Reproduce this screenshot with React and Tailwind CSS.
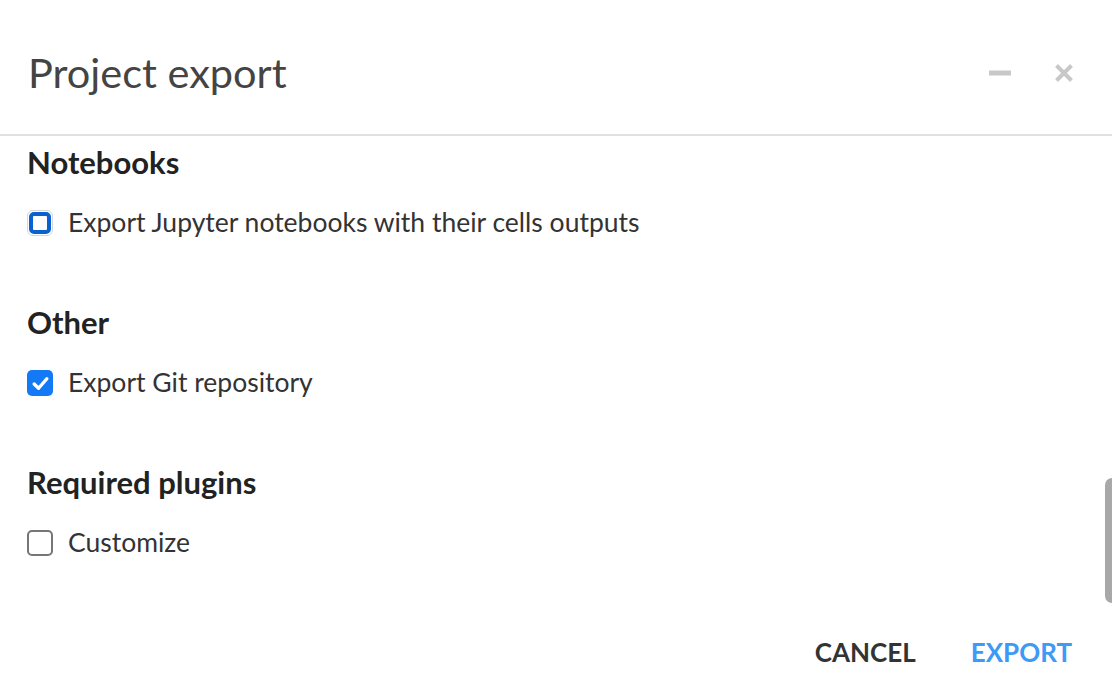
import { useState } from 'react'

const font = { fontFamily: 'Lato, "Noto Sans", sans-serif' }

function Checkbox({ checked, focused, onChange }) {
  if (checked) {
    return (
      <button onClick={onChange} className="w-[26px] h-[26px] rounded-[5px] bg-[#1479f5] flex items-center justify-center shrink-0">
        <svg width="19" height="19" viewBox="0 0 18 18">
          <path d="M3 9.5 L7.2 13.5 L15 4.5" fill="none" stroke="#fff" strokeWidth="3.2" strokeLinecap="round" strokeLinejoin="round" />
        </svg>
      </button>
    )
  }
  if (focused) {
    return (
      <button onClick={onChange} className="w-[26px] h-[26px] rounded-[6px] border border-[#d6d6d6] p-[1px] shrink-0">
        <span className="block w-full h-full rounded-[5px] border-[4px] border-[#0a62d0]" />
      </button>
    )
  }
  return (
    <button onClick={onChange} className="w-[26px] h-[26px] rounded-[5px] border-2 border-[#767676] bg-white shrink-0" />
  )
}

function Section({ title, label, checked, focused, onToggle, first }) {
  return (
    <div className={first ? 'pt-[6px]' : 'pt-[59px]'}>
      <h2 className="h-[40px] flex items-center text-[31px] font-bold text-[#222]">{title}</h2>
      <label className="mt-[21px] h-[40px] flex items-center gap-[15px] cursor-pointer">
        <Checkbox checked={checked} focused={focused} onChange={onToggle} />
        <span className="text-[26.5px] text-[#333]">{label}</span>
      </label>
    </div>
  )
}

export default function App() {
  const [opts, setOpts] = useState({ notebooks: false, git: true, plugins: false })
  const toggle = (k) => setOpts((o) => ({ ...o, [k]: !o[k] }))

  return (
    <div className="relative w-[1112px] h-[700px] bg-white overflow-hidden" style={font}>
      <div className="h-[136px] border-b-2 border-[#e0e0e0] flex items-center justify-between pl-[28px] pr-[38px]">
        <h1 className="text-[41.5px] text-[#444] pt-[10px]">Project export</h1>
        <div className="flex items-center gap-[43px] pt-[12px]">
          <svg width="22" height="6" viewBox="0 0 22 6">
            <rect x="0" y="0.5" width="22" height="5" fill="#c8c8c8" />
          </svg>
          <svg width="20" height="20" viewBox="0 0 20 20">
            <path d="M2.5 2.5 L17.5 17.5 M17.5 2.5 L2.5 17.5" stroke="#c8c8c8" strokeWidth="4" />
          </svg>
        </div>
      </div>

      <div className="px-[27px]">
        <Section
          first
          title="Notebooks"
          label="Export Jupyter notebooks with their cells outputs"
          checked={opts.notebooks}
          focused
          onToggle={() => toggle('notebooks')}
        />
        <Section
          title="Other"
          label="Export Git repository"
          checked={opts.git}
          onToggle={() => toggle('git')}
        />
        <Section
          title="Required plugins"
          label="Customize"
          checked={opts.plugins}
          onToggle={() => toggle('plugins')}
        />
      </div>

      <div className="flex justify-end items-center gap-[55px] pr-[40px] mt-[70px]">
        <button className="text-[26px] font-bold text-[#333] uppercase">Cancel</button>
        <button className="text-[26px] font-bold text-[#3d9af5] uppercase">Export</button>
      </div>

      <div className="absolute right-0 top-[478px] w-[7px] h-[125px] rounded-l-full bg-[#a8a8a8]" />
    </div>
  )
}
